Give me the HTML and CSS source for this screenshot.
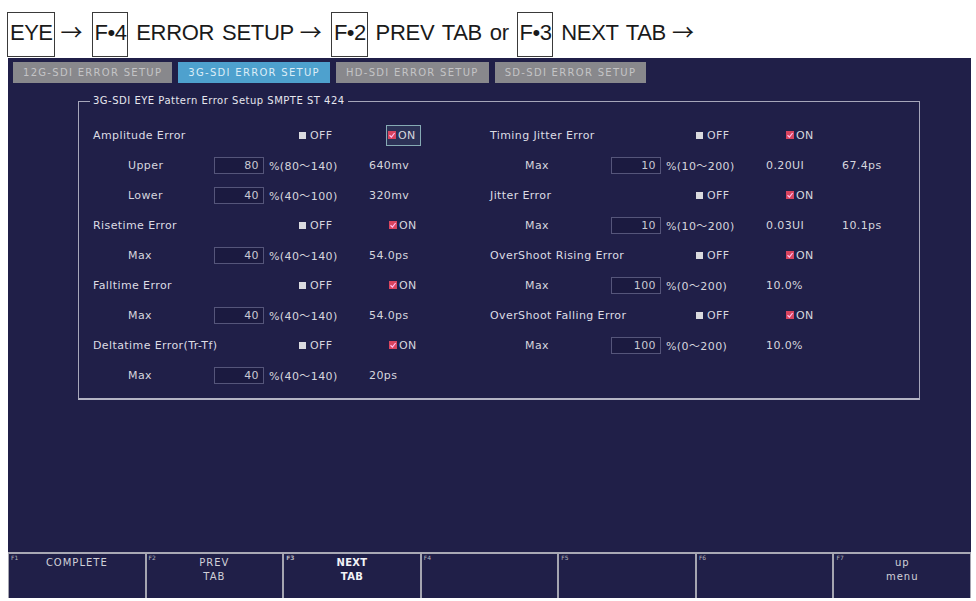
FILE: index.html
```html
<!DOCTYPE html>
<html>
<head>
<meta charset="utf-8">
<link rel="stylesheet" href="styles.css">
</head>
<body>
<div class="header"><span class="key">EYE</span><span class="arr">→</span><span class="key">F•4</span> ERROR SETUP<span class="arr">→</span><span class="key">F•2</span> PREV TAB or <span class="key">F•3</span> NEXT TAB<span class="arr">→</span></div>
<div class="screen">
  <div class="tabs">
    <div class="tab">12G-SDI ERROR SETUP</div>
    <div class="tab active">3G-SDI ERROR SETUP</div>
    <div class="tab">HD-SDI ERROR SETUP</div>
    <div class="tab">SD-SDI ERROR SETUP</div>
  </div>
  <div class="panel">
    <fieldset class="group">
      <legend>3G-SDI EYE Pattern Error Setup SMPTE ST 424</legend>
      <div class="cols">
        <div class="col">
          <div class="row"><span class="lbl">Amplitude Error</span><span class="opt"><i class="cb-off"></i>OFF</span><span class="opt on sel"><svg class="cb-on" viewBox="0 0 8 8"><rect width="8" height="8" fill="#d8445e"/><path d="M1.5 4.2 L3.4 6 L6.6 2" fill="none" stroke="#fbe" stroke-width="1.2"/></svg>ON</span></div>
          <div class="row sub"><span class="sl">Upper</span><span class="inp">80</span><span class="unit">%(80～140)</span><span class="val">640mv</span></div>
          <div class="row sub"><span class="sl">Lower</span><span class="inp">40</span><span class="unit">%(40～100)</span><span class="val">320mv</span></div>
          <div class="row"><span class="lbl">Risetime Error</span><span class="opt"><i class="cb-off"></i>OFF</span><span class="opt on"><svg class="cb-on" viewBox="0 0 8 8"><rect width="8" height="8" fill="#d8445e"/><path d="M1.5 4.2 L3.4 6 L6.6 2" fill="none" stroke="#fbe" stroke-width="1.2"/></svg>ON</span></div>
          <div class="row sub"><span class="sl">Max</span><span class="inp">40</span><span class="unit">%(40～140)</span><span class="val">54.0ps</span></div>
          <div class="row"><span class="lbl">Falltime Error</span><span class="opt"><i class="cb-off"></i>OFF</span><span class="opt on"><svg class="cb-on" viewBox="0 0 8 8"><rect width="8" height="8" fill="#d8445e"/><path d="M1.5 4.2 L3.4 6 L6.6 2" fill="none" stroke="#fbe" stroke-width="1.2"/></svg>ON</span></div>
          <div class="row sub"><span class="sl">Max</span><span class="inp">40</span><span class="unit">%(40～140)</span><span class="val">54.0ps</span></div>
          <div class="row"><span class="lbl">Deltatime Error(Tr-Tf)</span><span class="opt"><i class="cb-off"></i>OFF</span><span class="opt on"><svg class="cb-on" viewBox="0 0 8 8"><rect width="8" height="8" fill="#d8445e"/><path d="M1.5 4.2 L3.4 6 L6.6 2" fill="none" stroke="#fbe" stroke-width="1.2"/></svg>ON</span></div>
          <div class="row sub"><span class="sl">Max</span><span class="inp">40</span><span class="unit">%(40～140)</span><span class="val">20ps</span></div>
        </div>
        <div class="col">
          <div class="row"><span class="lbl">Timing Jitter Error</span><span class="opt"><i class="cb-off"></i>OFF</span><span class="opt on"><svg class="cb-on" viewBox="0 0 8 8"><rect width="8" height="8" fill="#d8445e"/><path d="M1.5 4.2 L3.4 6 L6.6 2" fill="none" stroke="#fbe" stroke-width="1.2"/></svg>ON</span></div>
          <div class="row sub"><span class="sl">Max</span><span class="inp">10</span><span class="unit">%(10～200)</span><span class="val">0.20UI</span><span class="val">67.4ps</span></div>
          <div class="row"><span class="lbl">Jitter Error</span><span class="opt"><i class="cb-off"></i>OFF</span><span class="opt on"><svg class="cb-on" viewBox="0 0 8 8"><rect width="8" height="8" fill="#d8445e"/><path d="M1.5 4.2 L3.4 6 L6.6 2" fill="none" stroke="#fbe" stroke-width="1.2"/></svg>ON</span></div>
          <div class="row sub"><span class="sl">Max</span><span class="inp">10</span><span class="unit">%(10～200)</span><span class="val">0.03UI</span><span class="val">10.1ps</span></div>
          <div class="row"><span class="lbl">OverShoot Rising Error</span><span class="opt"><i class="cb-off"></i>OFF</span><span class="opt on"><svg class="cb-on" viewBox="0 0 8 8"><rect width="8" height="8" fill="#d8445e"/><path d="M1.5 4.2 L3.4 6 L6.6 2" fill="none" stroke="#fbe" stroke-width="1.2"/></svg>ON</span></div>
          <div class="row sub"><span class="sl">Max</span><span class="inp">100</span><span class="unit">%(0～200)</span><span class="val">10.0%</span></div>
          <div class="row"><span class="lbl">OverShoot Falling Error</span><span class="opt"><i class="cb-off"></i>OFF</span><span class="opt on"><svg class="cb-on" viewBox="0 0 8 8"><rect width="8" height="8" fill="#d8445e"/><path d="M1.5 4.2 L3.4 6 L6.6 2" fill="none" stroke="#fbe" stroke-width="1.2"/></svg>ON</span></div>
          <div class="row sub"><span class="sl">Max</span><span class="inp">100</span><span class="unit">%(0～200)</span><span class="val">10.0%</span></div>
        </div>
      </div>
    </fieldset>
  </div>
  <div class="fkeys">
    <div class="fkey"><span class="fnum">F1</span>COMPLETE</div>
    <div class="fkey"><span class="fnum">F2</span>PREV<br>TAB</div>
    <div class="fkey bold"><span class="fnum">F3</span>NEXT<br>TAB</div>
    <div class="fkey"><span class="fnum">F4</span></div>
    <div class="fkey"><span class="fnum">F5</span></div>
    <div class="fkey"><span class="fnum">F6</span></div>
    <div class="fkey"><span class="fnum">F7</span>up<br>menu</div>
  </div>
</div>
</body>
</html>
```

FILE: styles.css
```css
html, body {
  margin: 0;
  padding: 0;
  background: #ffffff;
}

.header {
  height: 58px;
  box-sizing: border-box;
  padding: 12px 0 0 7px;
  font-family: "Liberation Sans", Arial, sans-serif;
  font-size: 22px;
  line-height: 25px;
  letter-spacing: -0.3px;
  word-spacing: 2px;
  color: #1a1a1a;
  white-space: nowrap;
  overflow: visible;
}

.key {
  display: inline-block;
  border: 1px solid #3a3a3a;
  padding: 7px 1px 11px 2px;
  letter-spacing: -0.5px;
  word-spacing: 0;
}

.arr {
  font-family: "Noto Sans CJK JP", "DejaVu Sans", sans-serif;
  font-size: 22px;
  line-height: 25px;
  letter-spacing: 0;
  margin: 0 9px 0 6px;
}

.screen {
  margin-left: 8px;
  width: 963px;
  height: 540px;
  background: #201f48;
  display: flex;
  flex-direction: column;
  font-family: "DejaVu Sans", "Noto Sans CJK JP", sans-serif;
  color: #d6d6de;
  position: relative;
}

.tabs {
  display: flex;
  gap: 6px;
  padding: 4px 0 0 5px;
}

.tab {
  height: 21px;
  line-height: 21px;
  padding: 0 10px;
  background: #88888c;
  color: #c4c4c6;
  font-size: 10px;
  letter-spacing: 1.3px;
  white-space: nowrap;
}

.tab.active {
  background: #4ea1ce;
  color: #dcedf7;
}

.panel {
  flex: 1;
}

.group {
  margin: 12px 0 0 70px;
  width: 842px;
  min-width: 0;
  box-sizing: border-box;
  border: 1px solid #a6a6ba;
  border-bottom: 2px solid #b4b4c4;
  padding: 13px 0 8px 14px;
}

.group legend {
  font-size: 10px;
  line-height: 12px;
  padding: 0 3px;
  margin-left: -3px;
  color: #e6e6ee;
  letter-spacing: 0.5px;
}

.cols {
  display: grid;
  grid-template-columns: 397px 1fr;
  font-size: 11px;
  letter-spacing: 0.4px;
}

.row {
  height: 30px;
  display: flex;
  align-items: center;
  white-space: nowrap;
}

.lbl {
  width: 206px;
  color: #dcdce4;
}

.opt {
  width: 90px;
  display: flex;
  align-items: center;
  gap: 4px;
  box-sizing: border-box;
}

.opt.on {
  gap: 2px;
}

.opt.sel {
  width: auto;
  border: 1px solid #86aab4;
  background: #2c3156;
  padding: 3px 4px 3px 1px;
  margin-left: -3px;
}

.cb-off {
  display: block;
  width: 7px;
  height: 7px;
  background: #dadadf;
}

.cb-on {
  display: block;
  width: 8px;
  height: 8px;
}

.sub {
  padding-left: 35px;
}

.sl {
  width: 86px;
}

.inp {
  width: 50px;
  height: 17px;
  box-sizing: border-box;
  border: 1px solid #55557a;
  background: #1b1a40;
  text-align: right;
  padding-right: 4px;
  line-height: 15px;
  margin-right: 5px;
  color: #c8c8d2;
}

.unit {
  width: 100px;
}

.val {
  width: 76px;
}

.fkeys {
  height: 46px;
  flex-shrink: 0;
  display: flex;
  box-sizing: border-box;
  border-top: 2px solid #a8a8b4;
}

.fkey {
  flex: 1;
  position: relative;
  border-left: 1px solid #a4a4b0;
  border-right: 1px solid #a4a4b0;
  text-align: center;
  padding-top: 2px;
  font-size: 10px;
  line-height: 14px;
  letter-spacing: 1px;
  color: #d0d0d8;
}

.fkey.bold {
  font-weight: bold;
  color: #f2f2f6;
  letter-spacing: 0.3px;
}

.fnum {
  position: absolute;
  left: 2px;
  top: 1px;
  font-size: 6px;
  line-height: 6px;
  letter-spacing: 0;
  color: #b4b4bc;
}
```
